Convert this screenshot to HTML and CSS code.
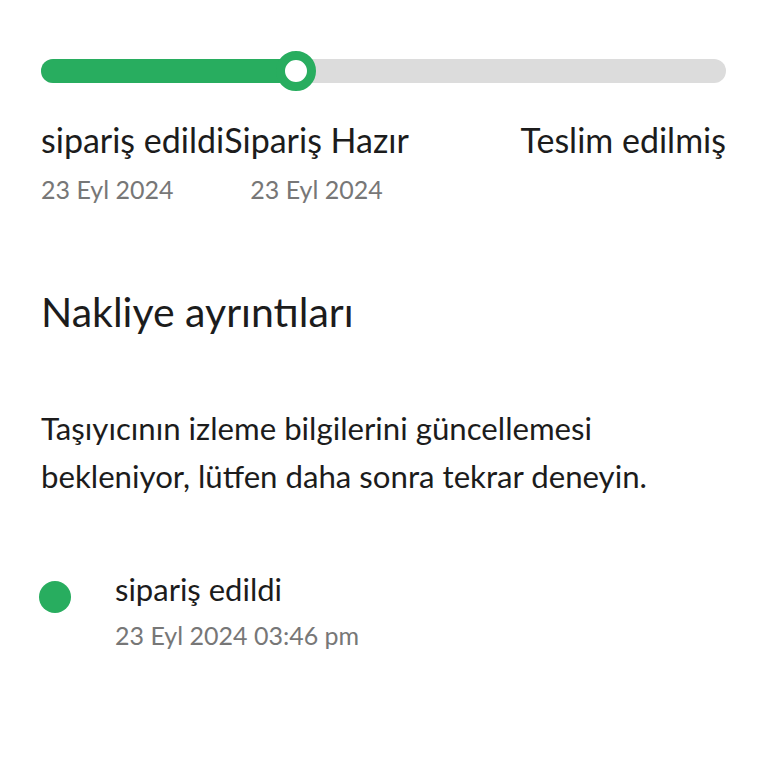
FILE: index.html
```html
<!DOCTYPE html>
<html>
<head>
<meta charset="utf-8">
<link rel="stylesheet" href="styles.css">
</head>
<body>
<div class="page">
  <div class="progress">
    <div class="track">
      <div class="fill"></div>
      <div class="knob"></div>
    </div>
  </div>
  <div class="steps">
    <div class="step step-left">
      <div class="step-title">sipariş edildi</div>
      <div class="step-date">23 Eyl 2024</div>
    </div>
    <div class="step step-mid">
      <div class="step-title">Sipariş Hazır</div>
      <div class="step-date">23 Eyl 2024</div>
    </div>
    <div class="step step-right">
      <div class="step-title">Teslim edilmiş</div>
    </div>
  </div>
  <h2 class="heading">Nakliye ayrıntıları</h2>
  <p class="info">Taşıyıcının izleme bilgilerini güncellemesi bekleniyor, lütfen daha sonra tekrar deneyin.</p>
  <div class="event">
    <div class="dot"></div>
    <div class="event-body">
      <div class="event-title">sipariş edildi</div>
      <div class="event-date">23 Eyl 2024 03:46 pm</div>
    </div>
  </div>
</div>
</body>
</html>
```
FILE: styles.css
```css
html, body {
  margin: 0;
  padding: 0;
  background: #ffffff;
}
body {
  font-family: Lato, "Noto Sans", sans-serif;
  color: #1c1c1c;
}
.page {
  padding: 51px 42px 0 41px;
}
.progress {
  height: 40px;
  display: flex;
  align-items: center;
}
.track {
  position: relative;
  flex: 1;
  height: 24px;
  border-radius: 12px;
  background: #dcdcdc;
}
.fill {
  width: 256px;
  height: 100%;
  border-radius: 12px;
  background: #28ad5f;
}
.knob {
  position: absolute;
  left: 235px;
  top: -8px;
  width: 22px;
  height: 22px;
  border: 9px solid #28ad5f;
  border-radius: 50%;
  background: #ffffff;
}
.steps {
  display: flex;
  margin-top: 29px;
}
.step-mid {
  text-align: center;
}
.step-right {
  margin-left: auto;
  text-align: right;
}
.step-title {
  font-size: 34px;
  line-height: 40px;
  color: #1c1c1c;
}
.step-date {
  margin-top: 14px;
  font-size: 25px;
  line-height: 30px;
  color: #777777;
}
.heading {
  margin: 84px 0 0;
  font-size: 41px;
  font-weight: normal;
  line-height: 48px;
  color: #1c1c1c;
}
.info {
  margin: 68px 0 0;
  max-width: 620px;
  font-size: 31.2px;
  line-height: 48px;
  color: #1c1c1c;
}
.event {
  display: flex;
  align-items: flex-start;
  margin-top: 70px;
}
.dot {
  flex: none;
  width: 32px;
  height: 32px;
  border-radius: 50%;
  background: #28ad5f;
  margin-top: 11px;
  margin-left: -2px;
}
.event-body {
  margin-left: 44px;
}
.event-title {
  font-size: 31px;
  line-height: 38px;
}
.event-date {
  margin-top: 12px;
  font-size: 25px;
  line-height: 30px;
  color: #777777;
}
```
